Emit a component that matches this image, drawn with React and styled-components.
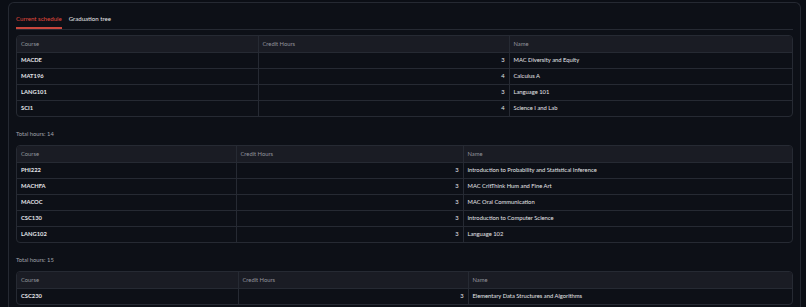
import React from 'react'
import styled, { createGlobalStyle } from 'styled-components'

const GlobalStyle = createGlobalStyle`
  html, body {
    margin: 0;
    padding: 0;
    background: #0b0e15;
    font-family: Lato, "Noto Sans", sans-serif;
    color: #e6e7ea;
  }
`

const schedules = [
  {
    widths: [241, 251],
    total: 14,
    rows: [
      ['MACDE', 3, 'MAC Diversity and Equity'],
      ['MAT196', 4, 'Calculus A'],
      ['LANG101', 3, 'Language 101'],
      ['SCI1', 4, 'Science I and Lab'],
    ],
  },
  {
    widths: [219, 227],
    total: 15,
    rows: [
      ['PHI222', 3, 'Introduction to Probability and Statistical Inference'],
      ['MACHFA', 3, 'MAC CritThink Hum and Fine Art'],
      ['MACOC', 3, 'MAC Oral Communication'],
      ['CSC130', 3, 'Introduction to Computer Science'],
      ['LANG102', 3, 'Language 102'],
    ],
  },
  {
    widths: [221, 230],
    total: null,
    rows: [['CSC230', 3, 'Elementary Data Structures and Algorithms']],
  },
]

export default function App() {
  return (
    <>
      <GlobalStyle />
      <Frame>
        <TabBar>
          <Tab $active>Current schedule</Tab>
          <Tab>Graduation tree</Tab>
        </TabBar>
        <Panel>
          {schedules.map((s, i) => (
            <React.Fragment key={i}>
              <TableWrap>
                <Table>
                  <colgroup>
                    <col style={{ width: s.widths[0] }} />
                    <col style={{ width: s.widths[1] }} />
                    <col />
                  </colgroup>
                  <thead>
                    <tr>
                      <Th>Course</Th>
                      <Th>Credit Hours</Th>
                      <Th>Name</Th>
                    </tr>
                  </thead>
                  <tbody>
                    {s.rows.map((r) => (
                      <tr key={r[0]}>
                        <Td $bold>{r[0]}</Td>
                        <Td $right>{r[1]}</Td>
                        <Td>{r[2]}</Td>
                      </tr>
                    ))}
                  </tbody>
                </Table>
              </TableWrap>
              {s.total !== null && <Total>Total hours: {s.total}</Total>}
            </React.Fragment>
          ))}
        </Panel>
      </Frame>
    </>
  )
}

const Frame = styled.div`
  margin: 2px 5px 0 8px;
  padding: 7px 7px 0 7px;
  border: 1px solid #252932;
  border-bottom: none;
  border-radius: 6px 6px 0 0;
  background: #0d1017;
  height: 310px;
  box-sizing: border-box;
  overflow: hidden;
`

const TabBar = styled.div`
  display: flex;
  gap: 7px;
  height: 19px;
  border-bottom: 1px solid #262a33;
`

const Tab = styled.div`
  font-size: 6.1px;
  line-height: 16px;
  height: 16px;
  margin-top: 1px;
  color: ${(p) => (p.$active ? '#e2493c' : '#e6e7ea')};
  border-bottom: 2px solid ${(p) => (p.$active ? '#c9473d' : 'transparent')};
`

const Panel = styled.div`
  padding-top: 5px;
`

const TableWrap = styled.div`
  border: 1px solid #262a33;
  border-radius: 4px;
  overflow: hidden;
`

const Table = styled.table`
  width: 100%;
  border-collapse: collapse;
  table-layout: fixed;
`

const Th = styled.th`
  background: #1a1c24;
  color: #93959d;
  font-family: Lato, "Noto Sans", sans-serif;
  font-size: 5.8px;
  font-weight: 400;
  line-height: 8px;
  text-align: left;
  height: 16px;
  padding: 0 4px;
  box-sizing: border-box;
  border-left: 1px solid #262a33;
  border-bottom: 1px solid #262a33;
  &:first-child { border-left: none; }
`

const Td = styled.td`
  height: 16px;
  padding: 0 4px;
  box-sizing: border-box;
  font-family: Lato, "Noto Sans", sans-serif;
  font-size: 5.8px;
  line-height: 8px;
  color: #e4e5e9;
  font-weight: ${(p) => (p.$bold ? 700 : 400)};
  text-align: ${(p) => (p.$right ? 'right' : 'left')};
  border-left: 1px solid #262a33;
  border-bottom: 1px solid #262a33;
  &:first-child { border-left: none; }
  tr:last-child > & { border-bottom: none; }
`

const Total = styled.p`
  margin: 12px 0 6px;
  font-size: 5.8px;
  line-height: 10px;
  color: #a3a5ac;
`
